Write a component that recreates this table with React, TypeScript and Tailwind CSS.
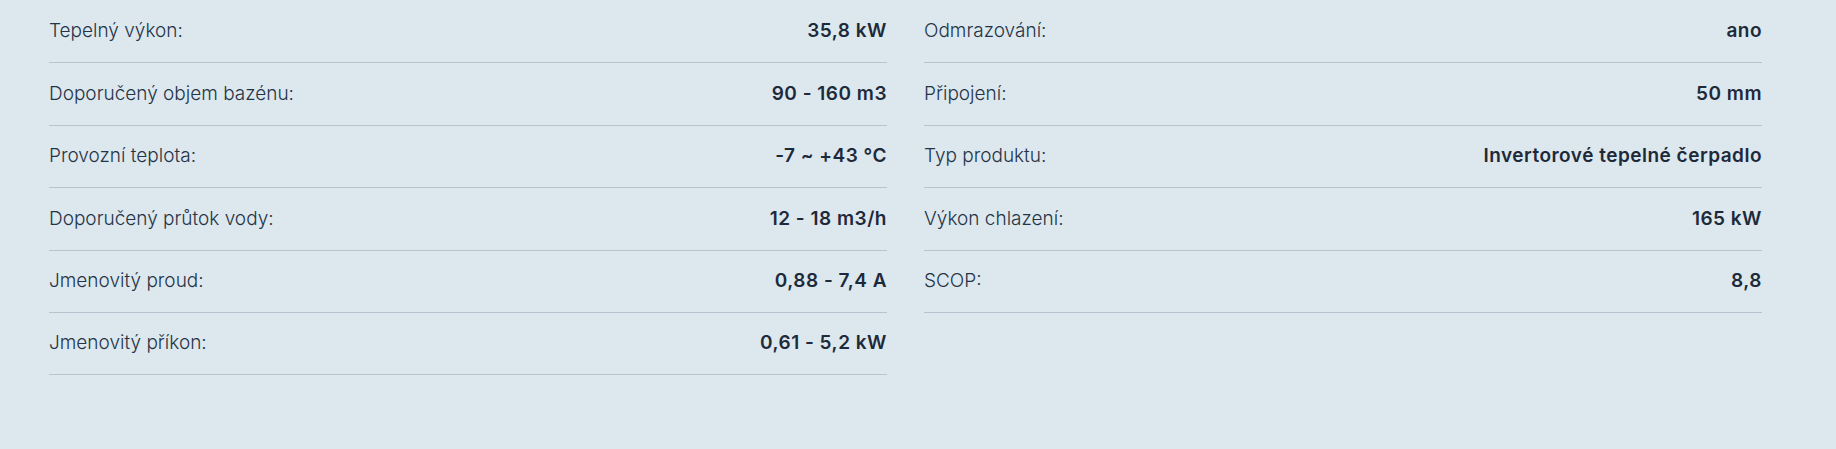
const left = [
  ['Tepelný výkon:', '35,8 kW'],
  ['Doporučený objem bazénu:', '90 - 160 m3'],
  ['Provozní teplota:', '-7 ~ +43 °C'],
  ['Doporučený průtok vody:', '12 - 18 m3/h'],
  ['Jmenovitý proud:', '0,88 - 7,4 A'],
  ['Jmenovitý příkon:', '0,61 - 5,2 kW'],
];

const right = [
  ['Odmrazování:', 'ano'],
  ['Připojení:', '50 mm'],
  ['Typ produktu:', 'Invertorové tepelné čerpadlo'],
  ['Výkon chlazení:', '165 kW'],
  ['SCOP:', '8,8'],
];

const SpecList = ({ rows }: { rows: string[][] }) => (
  <ul className="flex flex-col">
    {rows.map(([label, value]) => (
      <li
        key={label}
        className="h-[62.4px] flex items-center justify-between border-b border-[#b6c4d0]"
      >
        <span className="font-light text-[#243447]">{label}</span>
        <span className="font-semibold tracking-[0.5px] text-[#1d2a3a]">{value}</span>
      </li>
    ))}
  </ul>
);

const App = () => {
  return (
    <div className="min-h-screen w-full bg-[#dde7ee] font-['Inter','Liberation_Sans',sans-serif] text-[19px]">
      {/* Specs table */}
      <div className="w-[1713px] ml-[49px] pt-[1px] grid grid-cols-2 gap-x-[37px]">
        <SpecList rows={left} />
        <SpecList rows={right} />
      </div>
    </div>
  );
};

export default App;
